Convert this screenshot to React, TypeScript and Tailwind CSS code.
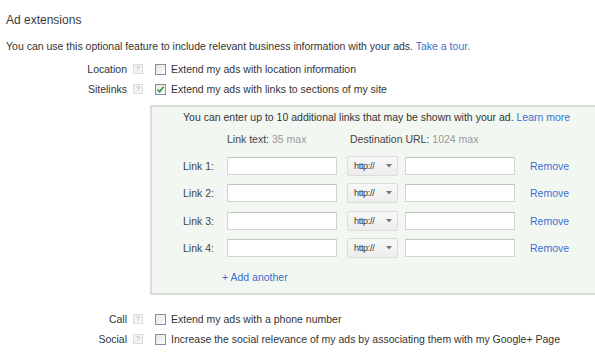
import React from "react";

const LINK = "text-[#3a6fd1]";

function Help() {
  return (
    <span className="w-[10px] h-[10px] border border-[#dcdcdc] bg-[#f4f4f4] text-[#a8a8a8] text-[7px] leading-[8px] flex items-center justify-center">
      ?
    </span>
  );
}

function Checkbox({ checked = false }: { checked?: boolean }) {
  return (
    <span className="relative w-[11px] h-[11px] border border-[#8f8f8f] border-b-[#7b8fb8] bg-gradient-to-br from-[#e6e6e6] to-[#fbfbfb] flex items-center justify-center">
      {checked && (
        <svg width="9" height="9" viewBox="0 0 9 9" className="absolute">
          <path d="M1.5 4.5 L3.6 6.7 L7.6 1.8" fill="none" stroke="#2e9a3a" strokeWidth="1.6" />
        </svg>
      )}
    </span>
  );
}

function OptionRow({ label, text, checked }: { label: string; text: string; checked?: boolean }) {
  return (
    <div className="flex items-center h-[20px]">
      <span className="w-[127px] text-right">{label}</span>
      <span className="ml-[6px]"><Help /></span>
      <span className="ml-[12px]"><Checkbox checked={checked} /></span>
      <span className="ml-[5px]">{text}</span>
    </div>
  );
}

function LinkRow({ n, mt }: { n: number; mt: string }) {
  return (
    <div className={`flex items-center h-[20px] ${mt}`}>
      <span className="w-[44px] text-[#444]">Link {n}:</span>
      <span className="w-[110px] h-[18px] bg-white border border-[#d4d4d4] border-t-[#c4c4c4]" />
      <span className="ml-[10px] w-[51px] h-[20px] rounded-[2px] border border-[#dcdcdc] bg-gradient-to-b from-[#f8f8f8] to-[#ededed] flex items-center pl-[6px] pr-[5px] justify-between">
        <span className="text-[9px] text-[#333] tracking-[-0.3px]">http://</span>
        <svg width="6" height="4" viewBox="0 0 6 4">
          <path d="M0 0 L6 0 L3 3.5 Z" fill="#777" />
        </svg>
      </span>
      <span className="ml-[7px] w-[110px] h-[18px] bg-white border border-[#d4d4d4] border-t-[#c4c4c4]" />
      <span className={`ml-[15px] ${LINK}`}>Remove</span>
    </div>
  );
}

export default function App() {
  return (
    <div className="w-[595px] h-[354px] bg-white overflow-hidden font-['Liberation_Sans',Arial,sans-serif] text-[10.5px] leading-[12px] text-[#333]">
      <div className="pl-[6px] mt-[13px] h-[14px] text-[12px] leading-[14px] text-[#3a3a3a]">Ad extensions</div>
      <div className="pl-[6px] mt-[13px] h-[12px]">
        You can use this optional feature to include relevant business information with your ads.{" "}
        <span className={LINK}>Take a tour.</span>
      </div>

      <div className="mt-[7px]">
        <OptionRow label="Location" text="Extend my ads with location information" />
        <OptionRow label="Sitelinks" text="Extend my ads with links to sections of my site" checked />
      </div>

      <div className="ml-[150px] mt-[6px] w-[460px] border-2 border-[#dcdcdc] bg-[#f3f7f1] pl-[31px] pt-[4px] pb-[10px]">
        <div className="h-[12px]">
          You can enter up to 10 additional links that may be shown with your ad.{" "}
          <span className={LINK}>Learn more</span>
        </div>
        <div className="flex h-[12px] mt-[10px] pl-[44px]">
          <span className="w-[123px] text-[#444]">
            Link text: <span className="text-[#999]">35 max</span>
          </span>
          <span className="text-[#444]">
            Destination URL: <span className="text-[#999]">1024 max</span>
          </span>
        </div>
        <LinkRow n={1} mt="mt-[11px]" />
        <LinkRow n={2} mt="mt-[7px]" />
        <LinkRow n={3} mt="mt-[8px]" />
        <LinkRow n={4} mt="mt-[7px]" />
        <div className={`mt-[13px] h-[12px] pl-[39px] ${LINK}`}>+ Add another</div>
      </div>

      <div className="mt-[14px]">
        <OptionRow label="Call" text="Extend my ads with a phone number" />
        <OptionRow label="Social" text="Increase the social relevance of my ads by associating them with my Google+ Page" />
      </div>
    </div>
  );
}
